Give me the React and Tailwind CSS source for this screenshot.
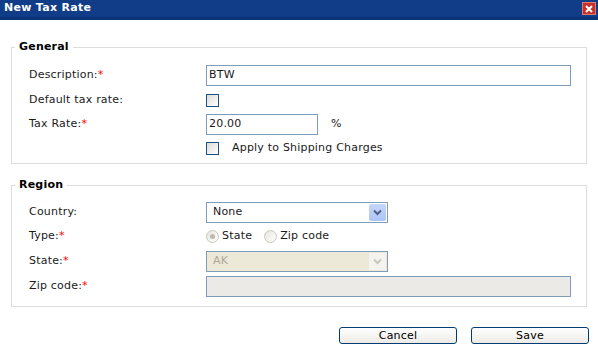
import React from 'react';

const font = { fontFamily: '"DejaVu Sans", Verdana, sans-serif' };

const Req = () => <span className="text-[#ff0000]">*</span>;

const Checkbox = () => (
    <span className="block h-[13px] w-[13px] border border-[#1c5180] bg-gradient-to-br from-[#dcdcd7] to-[#ffffff]" />
);

const Radio = ({ checked }) => (
    <span className="flex h-[13px] w-[13px] items-center justify-center rounded-full border border-[#cac8bb] bg-gradient-to-br from-[#e6e5df] to-[#ffffff]">
        {checked && <span className="h-[5px] w-[5px] rounded-full bg-[#bdbbae]" />}
    </span>
);

const Chevron = ({ color }) => (
    <svg width="9" height="7" viewBox="0 0 9 7">
        <path d="M1 1.5 L4.5 5 L8 1.5" fill="none" stroke={color} strokeWidth="2" />
    </svg>
);

const Select = ({ value, disabled }) => (
    <div
        className={`flex h-[21px] w-[182px] items-center justify-between border border-[#7f9db9] pl-[6px] pr-[1px] ${disabled ? 'bg-[#ece9d8] text-[#aca899]' : 'bg-white'}`}>
        <span>{value}</span>
        {disabled ? (
            <span className="flex h-[17px] w-[17px] items-center justify-center bg-[#f4f3ee]">
                <Chevron color="#c9c7ba" />
            </span>
        ) : (
            <span className="flex h-[17px] w-[17px] items-center justify-center rounded-[2px] bg-gradient-to-b from-[#c6d6fc] to-[#aec4f7]">
                <Chevron color="#4d6185" />
            </span>
        )}
    </div>
);

const Row = ({ label, children, className = '' }) => (
    <div className={`flex items-center ${className}`}>
        <div className="w-[177px] shrink-0">{label}</div>
        <div className="flex flex-1 items-center pr-[15px]">{children}</div>
    </div>
);

const Legend = ({ children }) => (
    <legend className="ml-[3px] px-[4px] text-[11px] leading-[14px] font-bold tracking-[0.2px] text-black">
        {children}
    </legend>
);

export default function App() {
    return (
        <div className="h-[356px] w-[598px] bg-white text-[11px] tracking-[0.2px] text-[#1a1a1a]" style={font}>
            <div className="flex h-[20px] items-center justify-between border-b-[3px] border-[#0c3276] bg-[#113d88] pl-[4px] pr-[2px]">
                <span className="text-[11px] font-bold tracking-[0.3px] text-white">New Tax Rate</span>
                <span className="flex h-[13px] w-[14px] items-center justify-center border border-[#e07a6e] bg-[#c8312a]">
                    <svg width="8" height="8" viewBox="0 0 8 8">
                        <path d="M1 1 L7 7 M7 1 L1 7" stroke="white" strokeWidth="2" />
                    </svg>
                </span>
            </div>

            <div className="px-[11px]">
                <fieldset className="mt-[20px] border border-[#dcdcdc] pb-[8px]">
                    <Legend>General</Legend>
                    <div className="pl-[17px]">
                        <Row className="mt-[11px] h-[21px]" label={<>Description:<Req /></>}>
                            <div className="flex h-[21px] flex-1 items-center border border-[#7f9db9] pl-[2px]">BTW</div>
                        </Row>
                        <Row className="mt-[8px] h-[13px]" label="Default tax rate:">
                            <Checkbox />
                        </Row>
                        <Row className="mt-[7px] h-[21px]" label={<>Tax Rate:<Req /></>}>
                            <div className="flex h-[21px] w-[112px] items-center border border-[#7f9db9] pl-[2px]">20.00</div>
                            <span className="ml-[13px]">%</span>
                        </Row>
                        <Row className="mt-[7px] h-[13px]" label="">
                            <Checkbox />
                            <span className="ml-[13px]">Apply to Shipping Charges</span>
                        </Row>
                    </div>
                </fieldset>

                <fieldset className="mt-[14px] border border-[#dcdcdc] pb-[9px]">
                    <Legend>Region</Legend>
                    <div className="pl-[17px]">
                        <Row className="mt-[10px] h-[21px]" label="Country:">
                            <Select value="None" />
                        </Row>
                        <Row className="mt-[7px] h-[13px]" label={<>Type:<Req /></>}>
                            <Radio checked />
                            <span className="ml-[3px]">State</span>
                            <span className="ml-[12px]">
                                <Radio />
                            </span>
                            <span className="ml-[3px]">Zip code</span>
                        </Row>
                        <Row className="mt-[8px] h-[21px]" label={<>State:<Req /></>}>
                            <Select value="AK" disabled />
                        </Row>
                        <Row className="mt-[4px] h-[21px]" label={<>Zip code:<Req /></>}>
                            <div className="h-[21px] flex-1 border border-[#7f9db9] bg-[#ebeae6]" />
                        </Row>
                    </div>
                </fieldset>
            </div>

            <div className="mt-[20px] flex justify-end gap-[14px] pr-[9px]">
                <button className="h-[17px] w-[118px] rounded-[3px] border border-[#003c74] bg-gradient-to-b from-[#ffffff] to-[#ecebe6] text-[11px] leading-[15px] tracking-[0.2px] text-black">
                    Cancel
                </button>
                <button className="h-[17px] w-[118px] rounded-[3px] border border-[#003c74] bg-gradient-to-b from-[#ffffff] to-[#ecebe6] text-[11px] leading-[15px] tracking-[0.2px] text-black">
                    Save
                </button>
            </div>
        </div>
    );
}
